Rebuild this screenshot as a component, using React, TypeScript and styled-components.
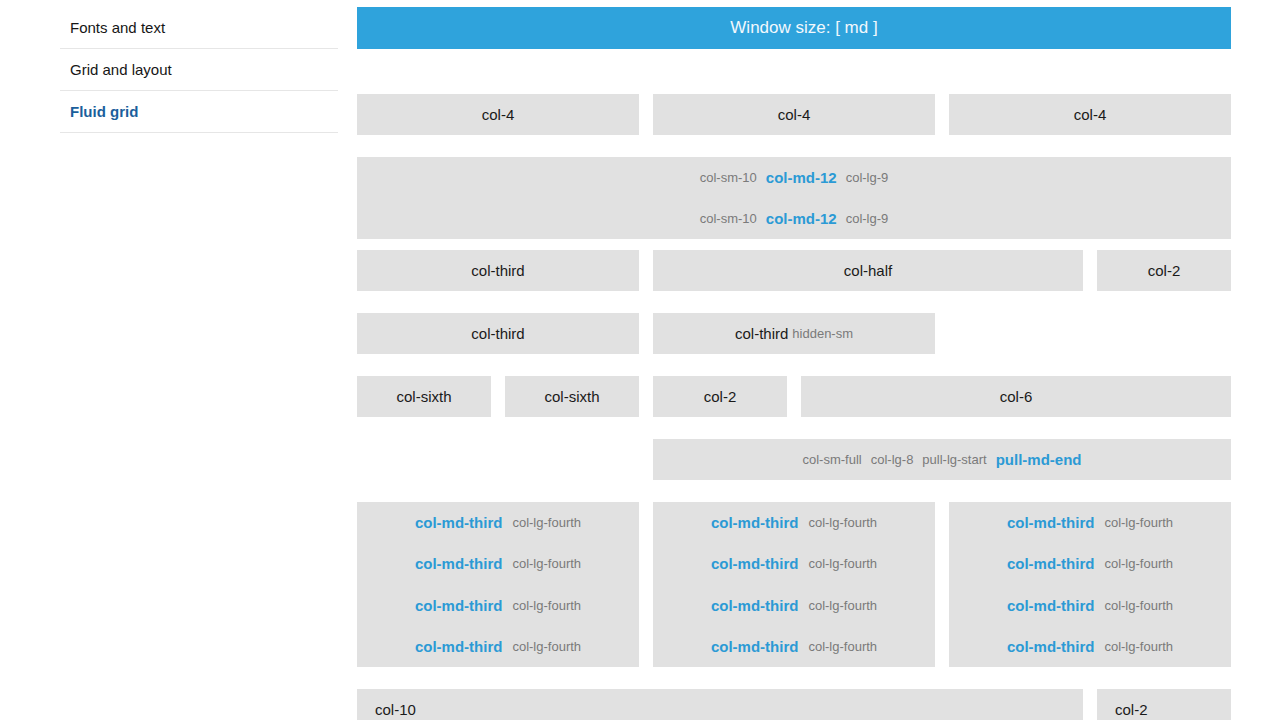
import React from "react";
import styled, { createGlobalStyle } from "styled-components";

const GlobalStyle = createGlobalStyle`
  body {
    margin: 0;
    background: #ffffff;
    font-family: "Liberation Sans", Arial, sans-serif;
    color: #1a1a1a;
    overflow: hidden;
  }
`;

const Page = styled.div`
  display: flex;
  gap: 19px;
  padding-left: 60px;
  height: 720px;
  overflow: hidden;
`;

const Sidebar = styled.nav`
  width: 278px;
  padding-top: 7px;
  flex-shrink: 0;
`;

const NavItem = styled.div<{ $active?: boolean }>`
  height: 41px;
  display: flex;
  align-items: center;
  padding-left: 10px;
  border-bottom: 1px solid #e6e6e6;
  font-size: 15px;
  font-weight: ${(p) => (p.$active ? 700 : 400)};
  color: ${(p) => (p.$active ? "#1b5f9c" : "#161616")};
`;

const Main = styled.main`
  width: 874px;
  padding-top: 7px;
`;

const Banner = styled.div`
  height: 42px;
  display: flex;
  align-items: center;
  justify-content: center;
  padding-left: 20px;
  background: #2fa3dc;
  color: #f2f8fc;
  font-size: 17px;
`;

const Row = styled.div<{ $top: number }>`
  display: grid;
  grid-template-columns: repeat(12, 60px);
  column-gap: 14px;
  margin-top: ${(p) => p.$top}px;
`;

const Cell = styled.div<{ $span: number; $start?: number; $left?: boolean }>`
  grid-column: ${(p) => (p.$start ? `${p.$start} / span ${p.$span}` : `span ${p.$span}`)};
  background: #e1e1e1;
  min-height: 41px;
  display: flex;
  flex-direction: column;
  justify-content: center;
  align-items: ${(p) => (p.$left ? "flex-start" : "center")};
  padding-left: ${(p) => (p.$left ? "18px" : "0")};
`;

const Line = styled.div<{ $gap?: number; $height?: number }>`
  height: ${(p) => p.$height ?? 41}px;
  display: flex;
  align-items: center;
  justify-content: center;
  gap: ${(p) => p.$gap ?? 9}px;
  font-size: 15px;
  color: #1a1a1a;
`;

const Muted = styled.span`
  font-size: 13px;
  color: #7a7a7a;
`;

const Strong = styled.span`
  font-size: 15px;
  font-weight: 700;
  color: #2b9ad5;
`;

const Label = styled.span`
  font-size: 15px;
  color: #1a1a1a;
`;

const navItems = ["Fonts and text", "Grid and layout", "Fluid grid"];

export default function App() {
  return (
    <>
      <GlobalStyle />
      <Page>
        <Sidebar>
          {navItems.map((item, i) => (
            <NavItem key={item} $active={i === 2}>
              {item}
            </NavItem>
          ))}
        </Sidebar>
        <Main>
          <Banner>Window size: [ md ]</Banner>

          <Row $top={45}>
            <Cell $span={4}><Label>col-4</Label></Cell>
            <Cell $span={4}><Label>col-4</Label></Cell>
            <Cell $span={4}><Label>col-4</Label></Cell>
          </Row>

          <Row $top={22}>
            <Cell $span={12}>
              {[0, 1].map((n) => (
                <Line key={n}>
                  <Muted>col-sm-10</Muted>
                  <Strong>col-md-12</Strong>
                  <Muted>col-lg-9</Muted>
                </Line>
              ))}
            </Cell>
          </Row>

          <Row $top={11}>
            <Cell $span={4}><Label>col-third</Label></Cell>
            <Cell $span={6}><Label>col-half</Label></Cell>
            <Cell $span={2}><Label>col-2</Label></Cell>
          </Row>

          <Row $top={22}>
            <Cell $span={4}><Label>col-third</Label></Cell>
            <Cell $span={4}>
              <Line $gap={4}>
                <Label>col-third</Label>
                <Muted>hidden-sm</Muted>
              </Line>
            </Cell>
          </Row>

          <Row $top={22}>
            <Cell $span={2}><Label>col-sixth</Label></Cell>
            <Cell $span={2}><Label>col-sixth</Label></Cell>
            <Cell $span={2}><Label>col-2</Label></Cell>
            <Cell $span={6}><Label>col-6</Label></Cell>
          </Row>

          <Row $top={22}>
            <Cell $span={8} $start={5}>
              <Line>
                <Muted>col-sm-full</Muted>
                <Muted>col-lg-8</Muted>
                <Muted>pull-lg-start</Muted>
                <Strong>pull-md-end</Strong>
              </Line>
            </Cell>
          </Row>

          <Row $top={22}>
            {[0, 1, 2].map((c) => (
              <Cell key={c} $span={4}>
                {[0, 1, 2, 3].map((n) => (
                  <Line key={n} $gap={10} $height={41.25}>
                    <Strong>col-md-third</Strong>
                    <Muted>col-lg-fourth</Muted>
                  </Line>
                ))}
              </Cell>
            ))}
          </Row>

          <Row $top={22}>
            <Cell $span={10} $left><Label>col-10</Label></Cell>
            <Cell $span={2} $left><Label>col-2</Label></Cell>
          </Row>
        </Main>
      </Page>
    </>
  );
}
